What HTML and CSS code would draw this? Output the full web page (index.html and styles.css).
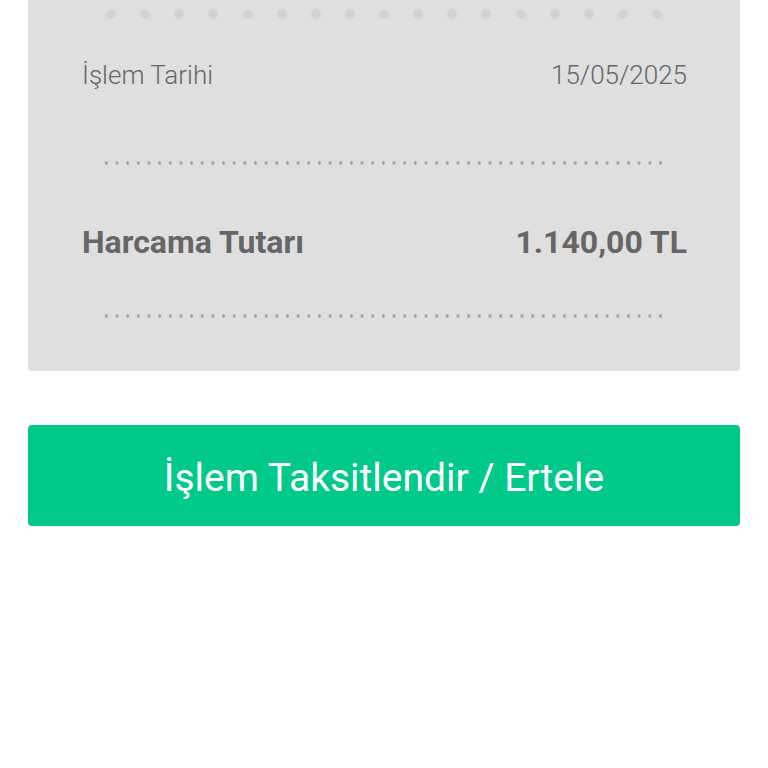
FILE: index.html
```html
<!DOCTYPE html>
<html lang="tr">
<head>
    <meta charset="UTF-8">
    <meta name="viewport" content="width=device-width, initial-scale=1.0">
    <title>İşlem Detayı</title>
    <link rel="stylesheet" href="styles.css">
</head>
<body>
    <div class="receipt">
        <div class="perforation">
            <span></span><span></span><span></span><span></span><span></span><span></span>
            <span></span><span></span><span></span><span></span><span></span><span></span>
            <span></span><span></span><span></span><span></span><span></span>
        </div>

        <div class="row row-date">
            <span>İşlem Tarihi</span>
            <span>15/05/2025</span>
        </div>

        <div class="dotted"></div>

        <div class="row row-total">
            <span>Harcama Tutarı</span>
            <span>1.140,00 TL</span>
        </div>

        <div class="dotted"></div>
    </div>

    <button class="action">İşlem Taksitlendir / Ertele</button>
</body>
</html>
```

FILE: styles.css
```css
body {
    margin: 0;
    background: #fff;
    font-family: Roboto, "Noto Sans", sans-serif;
    padding: 0 28px;
}
.receipt {
    background-color: #dfdfdf;
    border-radius: 0 0 4px 4px;
    padding: 9px 53px 53px 54px;
}
.perforation {
    display: flex;
    justify-content: space-between;
    margin: 0 25px 0 24px;
}
.perforation span {
    width: 10px;
    height: 10px;
    border-radius: 50%;
    background-color: #d2d2d2;
    filter: blur(0.6px);
}
.row {
    display: flex;
    justify-content: space-between;
    align-items: center;
    color: #666;
}
.row-date {
    font-size: 26px;
    font-weight: 300;
    margin-top: 41px;
    height: 30px;
}
.row-total {
    font-size: 32px;
    font-weight: 700;
    height: 38px;
}
.dotted {
    height: 4px;
    width: 565px;
    margin-left: 19px;
    background-image: radial-gradient(circle, #a5a5a5 1.5px, transparent 1.9px);
    background-size: 10.66px 4px;
    background-position: left center;
}
.row-date + .dotted {
    margin-top: 71px;
    margin-bottom: 58px;
}
.row-total + .dotted {
    margin-top: 53px;
}
.action {
    display: block;
    width: 100%;
    height: 101px;
    margin-top: 54px;
    padding: 4px 0 0;
    border: none;
    border-radius: 4px;
    background-color: #00c98a;
    color: #fff;
    font-family: Roboto, "Noto Sans", sans-serif;
    font-size: 39px;
    font-weight: 400;
    cursor: pointer;
}
```
